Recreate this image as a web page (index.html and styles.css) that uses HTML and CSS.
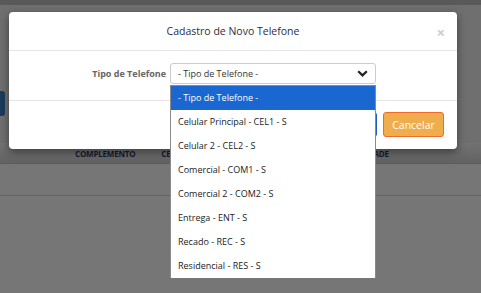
FILE: index.html
```html
<html>
<head>
  <meta charset="utf-8">
  <link rel="stylesheet" href="styles.css">
</head>
<body>

<div class="page">
  <div class="topbar"></div>
  <div class="toolbar">
    <span class="tool-btn"></span>
  </div>
  <div class="grid">
    <div class="grid-head">
      <span class="col col-comp">COMPLEMENTO</span>
      <span class="col col-cel">CELULAR</span>
      <span class="col col-ade">CIDADE</span>
    </div>
    <div class="grid-row"></div>
  </div>
</div>

<div class="modal">
  <div class="modal-header">
    <span class="modal-title">Cadastro de Novo Telefone</span>
    <span class="close">&times;</span>
  </div>
  <div class="modal-body">
    <label class="field-label">Tipo de Telefone</label>
    <div class="select">
      <span>- Tipo de Telefone -</span>
      <svg class="chevron" width="11" height="7" viewBox="0 0 11 7">
        <path d="M1.2 1.2 L5.5 5.4 L9.8 1.2" fill="none" stroke="#222" stroke-width="2.2"/>
      </svg>
    </div>
  </div>
  <div class="modal-footer">
    <button class="btn btn-primary">Salvar</button>
    <button class="btn btn-warning">Cancelar</button>
  </div>
</div>

<ul class="options">
  <li class="selected">- Tipo de Telefone -</li>
  <li>Celular Principal - CEL1 - S</li>
  <li>Celular 2 - CEL2 - S</li>
  <li>Comercial - COM1 - S</li>
  <li>Comercial 2 - COM2 - S</li>
  <li>Entrega - ENT - S</li>
  <li>Recado - REC - S</li>
  <li>Residencial - RES - S</li>
</ul>

</body>
</html>
```

FILE: styles.css
```css
body {
  margin: 0;
  width: 481px;
  height: 293px;
  overflow: hidden;
  position: relative;
  background-color: #767676;
  font-family: "Open Sans", "Liberation Sans", sans-serif;
  font-size: 9px;
  color: #333;
}
.page {
  background-color: #6f6f6f;
}
.topbar {
  height: 5px;
  background-color: #595959;
}
.toolbar {
  padding-top: 86px;
  height: 25px;
}
.tool-btn {
  display: block;
  width: 5px;
  height: 25px;
  background-color: #1b3a5c;
  border-radius: 0 3px 3px 0;
}
.grid {
  margin-top: 27px;
  background-color: #767676;
}
.grid-head {
  height: 20px;
  display: flex;
  align-items: center;
  background: linear-gradient(#727272, #626262);
  border-bottom: 1px solid #5c5c5c;
  font-size: 8px;
  font-weight: bold;
  color: #161a33;
  letter-spacing: -0.2px;
}
.col-comp {
  margin-left: 75px;
}
.col-cel {
  margin-left: 26px;
}
.col-ade {
  margin-left: 165px;
}
.grid-row {
  height: 31px;
  border-bottom: 1px solid #646464;
}

.modal {
  position: absolute;
  left: 9px;
  top: 12px;
  width: 448px;
  height: 137px;
  background-color: #fff;
  border-radius: 4px;
  box-shadow: 0 3px 8px rgba(0, 0, 0, 0.45);
}
.modal-header {
  height: 38px;
  border-bottom: 1px solid #e5e5e5;
  display: flex;
  align-items: center;
  justify-content: center;
  position: relative;
}
.modal-title {
  font-size: 10.5px;
  color: #2b2d42;
}
.close {
  position: absolute;
  right: 12px;
  top: 10px;
  font-size: 15px;
  color: #cdcdcd;
  font-weight: bold;
}
.modal-body {
  height: 49px;
  box-sizing: border-box;
  padding-top: 12px;
  display: flex;
  align-items: flex-start;
}
.field-label {
  width: 161px;
  box-sizing: border-box;
  padding-right: 4px;
  text-align: right;
  font-weight: bold;
  color: #666;
  line-height: 21px;
}
.select {
  width: 206px;
  height: 21px;
  box-sizing: border-box;
  border: 1px solid #ccc;
  border-radius: 3px;
  padding: 0 7px;
  display: flex;
  align-items: center;
  justify-content: space-between;
  color: #333;
}
.modal-footer {
  border-top: 1px solid #e5e5e5;
  padding: 11px 13px 0 0;
  display: flex;
  justify-content: flex-end;
  gap: 6px;
}
.btn {
  height: 25px;
  border-radius: 3px;
  font-family: "Open Sans", "Liberation Sans", sans-serif;
  font-size: 10.5px;
  color: #fff;
  padding: 0 8px;
}
.btn-primary {
  width: 56px;
  background-color: #1e6fd9;
  border: 1px solid #1a5fc0;
}
.btn-warning {
  width: 61px;
  background-color: #f0ad4e;
  border: 1px solid #f26a2a;
}

.options {
  position: absolute;
  left: 170px;
  top: 85px;
  width: 206px;
  box-sizing: border-box;
  margin: 0;
  padding: 0;
  list-style: none;
  background-color: #fff;
  border: 1px solid #8a8a8a;
  border-bottom: none;
}
.options li {
  height: 24px;
  line-height: 24px;
  padding-left: 7px;
  color: #222;
}
.options li.selected {
  background-color: #1a67d2;
  color: #fff;
}
```
